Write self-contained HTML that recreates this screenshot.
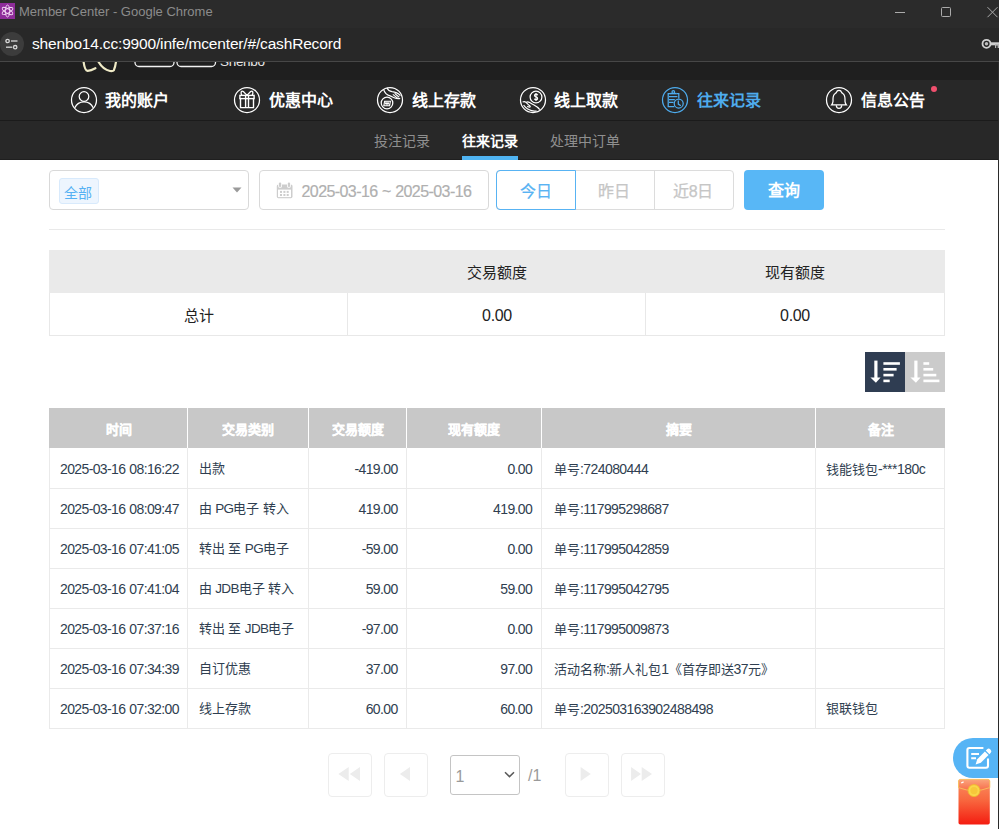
<!DOCTYPE html>
<html lang="zh-CN">
<head>
<meta charset="utf-8">
<title>Member Center</title>
<style>
*{box-sizing:border-box;margin:0;padding:0}
html,body{width:999px;height:829px;overflow:hidden;background:#fff;font-family:"Liberation Sans",sans-serif;position:relative}
.t{position:absolute;line-height:1;white-space:nowrap}
.r{position:absolute}
svg{position:absolute;overflow:visible}
</style>
</head>
<body>

<div class="r" style="left:0px;top:0px;width:999px;height:28px;background:#2b2b2b;"></div>
<div class="r" style="left:0px;top:28px;width:999px;height:33px;background:#282828;"></div>
<div class="r" style="left:0px;top:61px;width:999px;height:1px;background:#474747;"></div>
<svg style="left:0;top:3px" width="16" height="16" viewBox="0 0 16 16">
<rect x="0" y="0" width="15" height="16" fill="#8e2c9a"/>
<g fill="none" stroke="#f3d9f5" stroke-width="0.9">
<ellipse cx="7.5" cy="8" rx="2.2" ry="6"/>
<ellipse cx="7.5" cy="8" rx="2.2" ry="6" transform="rotate(60 7.5 8)"/>
<ellipse cx="7.5" cy="8" rx="2.2" ry="6" transform="rotate(-60 7.5 8)"/>
</g></svg>
<div class="t" style="top:5.0px;font-size:13px;color:#8c8c8c;left:19.0px;">Member Center - Google Chrome</div>
<div class="r" style="left:895px;top:12px;width:10px;height:1px;background:#ababab;"></div>
<div class="r" style="left:941px;top:7px;width:10px;height:10px;border:1px solid #ababab;border-radius:1.5px"></div>
<svg style="left:986px;top:6px" width="13" height="12" viewBox="0 0 12 12"><path d="M1 1.2L11 11.2M11 1.2L1 11.2" stroke="#ababab" stroke-width="1"/></svg>
<div class="r" style="left:0;top:32px;width:24px;height:24px;border-radius:12px;background:#3c3c3c"></div>
<svg style="left:0;top:32px" width="24" height="24" viewBox="0 0 24 24" fill="none" stroke="#d8d8d8" stroke-width="1.3">
<circle cx="7.6" cy="9" r="1.7"/><path d="M11 9H17.5"/>
<circle cx="15.2" cy="15.2" r="1.7"/><path d="M6 15.2H12.3"/></svg>
<div class="t" style="top:35.5px;font-size:15.5px;color:#ffffff;left:32.0px;"><span style="letter-spacing:-0.17px;">shenbo14.cc:9900/infe/mcenter/#/cashRecord</span></div>
<svg style="left:980px;top:37px" width="20" height="14" viewBox="0 0 20 14">
<circle cx="6.5" cy="6.8" r="4" fill="none" stroke="#d0d0d0" stroke-width="1.8"/><circle cx="6.5" cy="6.8" r="1.7" fill="#bdbdbd"/>
<rect x="10" y="5.3" width="10" height="3" fill="#d0d0d0"/><rect x="15" y="7" width="5" height="4" fill="#b8b8b8"/><rect x="16.2" y="8.6" width="1.4" height="2.6" fill="#2a2a2a"/>
</svg>
<div class="r" style="left:0px;top:62px;width:998px;height:18px;background:#1f1f1f;"></div>
<svg style="left:0;top:62px;overflow:hidden" width="300" height="18" viewBox="0 62 300 18">
<g fill="none" stroke="#efeac6" stroke-width="2.2" stroke-linecap="round">
<path d="M83.4 60 Q84.4 70.5 87.6 70.8 Q91 70.6 95.4 68.2"/>
<path d="M98.6 62 Q103 69.5 110 71 Q113 71.4 113.8 70.4 Q115.6 66 116.2 60"/>
</g>
<g fill="none" stroke="#f2f2f2" stroke-width="1.3">
<rect x="135" y="50" width="39" height="16.5" rx="4"/>
<rect x="177" y="50" width="38.5" height="16.5" rx="4"/>
</g>
<text x="220" y="65.5" font-family="Liberation Sans" font-size="13.5" fill="#e8e8e8" letter-spacing="-0.3">Shenbo</text>
</svg>
<div class="r" style="left:0px;top:80px;width:998px;height:40px;background:#282828;"></div>
<div class="r" style="left:0px;top:120px;width:998px;height:1px;background:#1b1b1b;"></div>
<div class="r" style="left:0px;top:121px;width:998px;height:38px;background:#282828;"></div>
<div class="r" style="left:0px;top:159px;width:998px;height:1px;background:#1f1f1f;"></div>
<div class="r" style="left:998px;top:62px;width:1px;height:767px;background:#2b2b2b;"></div>
<svg style="left:71px;top:87px" width="26" height="26" viewBox="0 0 26 26" fill="none" stroke="#ffffff" stroke-width="1.25"><circle cx="13" cy="13" r="12.5"/><circle cx="13" cy="9.5" r="4.8"/><path d="M3.8 20.8 A10.05 10.05 0 0 1 22.2 20.8"/></svg>
<div class="t" style="top:93.0px;font-size:16px;color:#ffffff;font-weight:bold;left:104.5px;">我的账户</div>
<svg style="left:234px;top:87px" width="26" height="26" viewBox="0 0 26 26" fill="none" stroke="#ffffff" stroke-width="1.25"><circle cx="13" cy="13" r="12.5"/><rect x="5.9" y="8.4" width="14.2" height="3.2" stroke-width="1.4"/><path d="M6.5 11.2V20.6H19.5V11.2M11.6 8.6V20.6M14.5 8.6V20.6" stroke-width="1.4"/><path d="M13 8.4 L9.4 4.6 Q7.8 3.6 7.2 5 Q6.8 6.4 7.8 8.4 M13 8.4 L16.6 4.6 Q18.2 3.6 18.8 5 Q19.2 6.4 18.2 8.4" stroke-width="1.3"/></svg>
<div class="t" style="top:93.0px;font-size:16px;color:#ffffff;font-weight:bold;left:268.5px;">优惠中心</div>
<svg style="left:377px;top:87px" width="26" height="26" viewBox="0 0 26 26" fill="none" stroke="#ffffff" stroke-width="1.25"><circle cx="13" cy="13" r="12.5"/><circle cx="10" cy="16" r="5.8"/><path d="M6.8 18.8 L7.6 14.2 H13.4 L12.6 18.8Z M8.2 17.4 L9 15.4 L10 17.4 L11 15.4 L12 17.4" stroke-width="1.1"/><path d="M6.6 2.4 Q8 7.6 13.2 8.9 L17.2 10.7 Q20.4 12.2 23.2 11.4 M10 1 Q11.4 4.2 15 4.6 Q20.2 5 23.4 8.6 M15.8 7.4 L20.8 11.4 M17.6 6.4 L22.2 10.2" stroke-width="1.2"/></svg>
<div class="t" style="top:93.0px;font-size:16px;color:#ffffff;font-weight:bold;left:411.5px;">线上存款</div>
<svg style="left:520px;top:87px" width="26" height="26" viewBox="0 0 26 26" fill="none" stroke="#ffffff" stroke-width="1.25"><circle cx="13" cy="13" r="12.5"/><circle cx="16" cy="10" r="5.9"/><path d="M17.7 8.2 Q17.2 7.1 16 7.1 Q14.5 7.1 14.5 8.4 Q14.5 9.6 16 9.8 Q17.6 10 17.6 11.4 Q17.6 12.8 16 12.8 Q14.7 12.8 14.3 11.8 M16 6 V14" stroke-width="1.2"/><path d="M2.6 15 Q4.6 14 6 15.4 L9.4 18.6 Q11 19.8 9.6 20.2 L7.2 19.4 M6.2 15.2 Q8 14.6 9.6 15.6 Q12.4 17.4 14 18 Q17.4 19.6 19.8 22.6 M3.6 18.2 Q7 22.6 11.6 23.6 Q14.6 24.2 16.6 24.2" stroke-width="1.2"/></svg>
<div class="t" style="top:93.0px;font-size:16px;color:#ffffff;font-weight:bold;left:553.5px;">线上取款</div>
<svg style="left:662px;top:87px" width="26" height="26" viewBox="0 0 26 26" fill="none" stroke="#4eacee" stroke-width="1.25"><circle cx="13" cy="13" r="12.5"/><path d="M12.4 19.5 H6.2 V6.6 H8.2 M14.4 6.6 H16.8 V11.6"/><circle cx="11.3" cy="5" r="1.3"/><path d="M8 6.6 H14.6" stroke-width="1.5"/><path d="M7 9.6 H15.4 M7 12.5 H12.8 M7 15.4 H11.6"/><circle cx="16.7" cy="16.5" r="4.5"/><path d="M16.3 13.6 V17.1 L18.8 18.8"/></svg>
<div class="t" style="top:93.0px;font-size:16px;color:#4eacee;font-weight:bold;left:696.5px;">往来记录</div>
<svg style="left:826px;top:87px" width="26" height="26" viewBox="0 0 26 26" fill="none" stroke="#ffffff" stroke-width="1.25"><circle cx="13" cy="13" r="12.5"/><path d="M13 3.4 Q11 3.4 10.4 5.4 Q10 6.1 9.3 6.5 Q7.1 7.6 7 12 V14.4 Q6.8 16.4 5.6 17.9 H20.4 Q19.2 16.4 19 14.4 V12 Q18.9 7.6 16.7 6.5 Q16 6.1 15.6 5.4 Q15 3.4 13 3.4Z"/><path d="M10.3 18.2 Q10.4 21.4 13 21.4 Q15.6 21.4 15.7 18.2"/></svg>
<div class="t" style="top:93.0px;font-size:16px;color:#ffffff;font-weight:bold;left:860.5px;">信息公告</div>
<div class="r" style="left:931px;top:86px;width:6px;height:6px;border-radius:3px;background:#f0506e"></div>
<div class="t" style="top:134.0px;font-size:14px;color:#8f8f8f;left:374.0px;">投注记录</div>
<div class="t" style="top:134.0px;font-size:14px;color:#ffffff;font-weight:bold;left:462.0px;">往来记录</div>
<div class="r" style="left:462px;top:156px;width:56px;height:4px;background:#4fb3f1;"></div>
<div class="t" style="top:134.0px;font-size:14px;color:#8f8f8f;left:550.0px;">处理中订单</div>
<div class="r" style="left:49px;top:170px;width:200px;height:40px;border:1px solid #d9d9d9;border-radius:4px"></div>
<div class="r" style="left:59px;top:178px;width:40px;height:26px;border:1px solid #d8eafc;border-radius:3px;background:#edf5fe"></div>
<div class="t" style="top:186.0px;font-size:14px;color:#55b1f3;left:64.0px;">全部</div>
<svg style="left:232px;top:187px" width="10" height="6" viewBox="0 0 10 6"><path d="M0.5 0.5H9.5L5 5.5Z" fill="#9a9a9a"/></svg>
<div class="r" style="left:259px;top:170px;width:230px;height:40px;border:1px solid #d9d9d9;border-radius:4px"></div>
<svg style="left:276px;top:182px" width="17" height="17" viewBox="0 0 17 17">
<rect x="0.8" y="2.5" width="15.7" height="13.7" rx="1.6" fill="#cdcdcd"/>
<rect x="2" y="7.6" width="13" height="7.5" fill="#fff"/>
<rect x="2.1" y="-0.2" width="3.9" height="6" rx="1.9" fill="#fff"/>
<rect x="11" y="-0.2" width="3.9" height="6" rx="1.9" fill="#fff"/>
<rect x="2.9" y="0.4" width="2.3" height="4.6" rx="1.1" fill="#cdcdcd"/>
<rect x="11.8" y="0.4" width="2.3" height="4.6" rx="1.1" fill="#cdcdcd"/>
<g fill="#cdcdcd"><rect x="4" y="8.9" width="2" height="2"/><rect x="7.4" y="8.9" width="2" height="2"/><rect x="10.7" y="8.9" width="2" height="2"/>
<rect x="4" y="12" width="2" height="2"/><rect x="7.4" y="12" width="2" height="2"/><rect x="10.7" y="12" width="2" height="2"/></g>
</svg>
<div class="t" style="top:183.5px;font-size:16px;color:#b0b0b0;left:301.5px;-webkit-text-stroke:0.2px #b0b0b0;"><span style="letter-spacing:-0.58px;">2025-03-16</span> <span style="letter-spacing:-0.58px;">~</span> <span style="letter-spacing:-0.58px;">2025-03-16</span></div>
<div class="r" style="left:496px;top:170px;width:238px;height:40px;border:1px solid #dcdcdc;border-radius:4px"></div>
<div class="r" style="left:654px;top:171px;width:1px;height:38px;background:#dcdcdc;"></div>
<div class="r" style="left:496px;top:170px;width:80px;height:40px;border:1px solid #58b3f3;border-radius:4px 0 0 4px"></div>
<div class="t" style="top:184.0px;font-size:16px;color:#58b3f3;left:535.5px;width:0;display:flex;justify-content:center;-webkit-text-stroke:0.2px #58b3f3;">今日</div>
<div class="t" style="top:184.0px;font-size:16px;color:#c6c6c6;left:614.0px;width:0;display:flex;justify-content:center;-webkit-text-stroke:0.25px #c6c6c6;">昨日</div>
<div class="t" style="top:184.0px;font-size:16px;color:#c6c6c6;left:693.0px;width:0;display:flex;justify-content:center;-webkit-text-stroke:0.25px #c6c6c6;">近<span style="letter-spacing:-0.50px;">8</span>日</div>
<div class="r" style="left:744px;top:170px;width:80px;height:40px;border-radius:4px;background:#58b7f6"></div>
<div class="t" style="top:183.0px;font-size:16px;color:#ffffff;font-weight:bold;left:784.0px;width:0;display:flex;justify-content:center;">查询</div>
<div class="r" style="left:49px;top:229px;width:896px;height:1px;background:#e9e9e9;"></div>
<div class="r" style="left:49px;top:250px;width:896px;height:86px;border:1px solid #e8e8e8"></div>
<div class="r" style="left:49px;top:250px;width:896px;height:43px;background:#eaeaea;"></div>
<div class="r" style="left:347px;top:293px;width:1px;height:42px;background:#e8e8e8;"></div>
<div class="r" style="left:645px;top:293px;width:1px;height:42px;background:#e8e8e8;"></div>
<div class="t" style="top:265.0px;font-size:15px;color:#222;left:497.0px;width:0;display:flex;justify-content:center;">交易额度</div>
<div class="t" style="top:265.0px;font-size:15px;color:#222;left:795.2px;width:0;display:flex;justify-content:center;">现有额度</div>
<div class="t" style="top:307.5px;font-size:15px;color:#222;left:198.6px;width:0;display:flex;justify-content:center;">总计</div>
<div class="t" style="top:308.0px;font-size:16px;color:#222;left:497.0px;width:0;display:flex;justify-content:center;"><span style="letter-spacing:-0.30px;">0.00</span></div>
<div class="t" style="top:308.0px;font-size:16px;color:#222;left:795.0px;width:0;display:flex;justify-content:center;"><span style="letter-spacing:-0.30px;">0.00</span></div>
<div class="r" style="left:865px;top:352px;width:40px;height:40px;background:#2f3d52;"></div>
<div class="r" style="left:905px;top:352px;width:40px;height:40px;background:#cbcbcb;"></div>
<svg style="left:865px;top:352px" width="80" height="40" viewBox="865 352 80 40" fill="#ffffff">
<rect x="874.3" y="360.6" width="3.2" height="18"/><path d="M870.4 377.6 H880.6 L875.9 382.8Z"/>
<rect x="883.4" y="362.2" width="16.5" height="2.6"/><rect x="883.4" y="368" width="13.2" height="2.6"/><rect x="883.4" y="373.8" width="10.2" height="2.6"/><rect x="883.4" y="379.6" width="6.3" height="2.6"/>
<rect x="914.3" y="360.6" width="3.2" height="18"/><path d="M910.4 377.6 H920.6 L915.9 382.8Z"/>
<rect x="923.4" y="362.2" width="5.8" height="2.6"/><rect x="923.4" y="368" width="9.8" height="2.6"/><rect x="923.4" y="373.8" width="12.9" height="2.6"/><rect x="923.4" y="379.6" width="16" height="2.6"/>
</svg>
<div class="r" style="left:49px;top:408px;width:896px;height:40px;background:#c8c8c8;"></div>
<div class="r" style="left:187px;top:408px;width:1px;height:40px;background:#ffffff;"></div>
<div class="r" style="left:308px;top:408px;width:1px;height:40px;background:#ffffff;"></div>
<div class="r" style="left:406px;top:408px;width:1px;height:40px;background:#ffffff;"></div>
<div class="r" style="left:541px;top:408px;width:1px;height:40px;background:#ffffff;"></div>
<div class="r" style="left:815px;top:408px;width:1px;height:40px;background:#ffffff;"></div>
<div class="t" style="top:423.0px;font-size:13px;color:#ffffff;font-weight:bold;left:118.5px;width:0;display:flex;justify-content:center;-webkit-text-stroke:0.25px #fff;">时间</div>
<div class="t" style="top:423.0px;font-size:13px;color:#ffffff;font-weight:bold;left:248.0px;width:0;display:flex;justify-content:center;-webkit-text-stroke:0.25px #fff;">交易类别</div>
<div class="t" style="top:423.0px;font-size:13px;color:#ffffff;font-weight:bold;left:357.5px;width:0;display:flex;justify-content:center;-webkit-text-stroke:0.25px #fff;">交易额度</div>
<div class="t" style="top:423.0px;font-size:13px;color:#ffffff;font-weight:bold;left:474.0px;width:0;display:flex;justify-content:center;-webkit-text-stroke:0.25px #fff;">现有额度</div>
<div class="t" style="top:423.0px;font-size:13px;color:#ffffff;font-weight:bold;left:678.5px;width:0;display:flex;justify-content:center;-webkit-text-stroke:0.25px #fff;">摘要</div>
<div class="t" style="top:423.0px;font-size:13px;color:#ffffff;font-weight:bold;left:880.5px;width:0;display:flex;justify-content:center;-webkit-text-stroke:0.25px #fff;">备注</div>
<div class="r" style="left:49px;top:448px;width:896px;height:281px;border:1px solid #eaeaea;border-top:0"></div>
<div class="r" style="left:49px;top:488px;width:896px;height:1px;background:#eaeaea;"></div>
<div class="r" style="left:49px;top:528px;width:896px;height:1px;background:#eaeaea;"></div>
<div class="r" style="left:49px;top:568px;width:896px;height:1px;background:#eaeaea;"></div>
<div class="r" style="left:49px;top:608px;width:896px;height:1px;background:#eaeaea;"></div>
<div class="r" style="left:49px;top:648px;width:896px;height:1px;background:#eaeaea;"></div>
<div class="r" style="left:49px;top:688px;width:896px;height:1px;background:#eaeaea;"></div>
<div class="r" style="left:187px;top:448px;width:1px;height:281px;background:#eaeaea;"></div>
<div class="r" style="left:308px;top:448px;width:1px;height:281px;background:#eaeaea;"></div>
<div class="r" style="left:406px;top:448px;width:1px;height:281px;background:#eaeaea;"></div>
<div class="r" style="left:541px;top:448px;width:1px;height:281px;background:#eaeaea;"></div>
<div class="r" style="left:815px;top:448px;width:1px;height:281px;background:#eaeaea;"></div>
<div class="t" style="top:461.5px;font-size:14px;color:#2f3e50;left:60.0px;"><span style="letter-spacing:-0.62px;">2025-03-16</span> <span style="letter-spacing:-0.62px;">08:16:22</span></div>
<div class="t" style="top:461.5px;font-size:13px;color:#2f3e50;left:198.5px;">出款</div>
<div class="t" style="top:461.5px;font-size:14px;color:#2f3e50;right:601.4px;"><span style="letter-spacing:-0.62px;">-419.00</span></div>
<div class="t" style="top:461.5px;font-size:14px;color:#2f3e50;right:466.8px;"><span style="letter-spacing:-0.62px;">0.00</span></div>
<div class="t" style="top:461.5px;font-size:13px;color:#2f3e50;left:554.0px;">单号<span style="letter-spacing:-0.58px;font-size:14px;">:724080444</span></div>
<div class="t" style="top:461.5px;font-size:13px;color:#2f3e50;left:826.0px;">钱能钱包<span style="letter-spacing:-0.50px;font-size:14px;">-***180c</span></div>
<div class="t" style="top:501.5px;font-size:14px;color:#2f3e50;left:60.0px;"><span style="letter-spacing:-0.62px;">2025-03-16</span> <span style="letter-spacing:-0.62px;">08:09:47</span></div>
<div class="t" style="top:501.5px;font-size:13px;color:#2f3e50;left:198.5px;">由 <span style="letter-spacing:-0.60px;font-size:13.5px;">PG</span>电子 转入</div>
<div class="t" style="top:501.5px;font-size:14px;color:#2f3e50;right:601.4px;"><span style="letter-spacing:-0.62px;">419.00</span></div>
<div class="t" style="top:501.5px;font-size:14px;color:#2f3e50;right:466.8px;"><span style="letter-spacing:-0.62px;">419.00</span></div>
<div class="t" style="top:501.5px;font-size:13px;color:#2f3e50;left:554.0px;">单号<span style="letter-spacing:-0.58px;font-size:14px;">:117995298687</span></div>
<div class="t" style="top:541.5px;font-size:14px;color:#2f3e50;left:60.0px;"><span style="letter-spacing:-0.62px;">2025-03-16</span> <span style="letter-spacing:-0.62px;">07:41:05</span></div>
<div class="t" style="top:541.5px;font-size:13px;color:#2f3e50;left:198.5px;">转出 至 <span style="letter-spacing:-0.60px;font-size:13.5px;">PG</span>电子</div>
<div class="t" style="top:541.5px;font-size:14px;color:#2f3e50;right:601.4px;"><span style="letter-spacing:-0.62px;">-59.00</span></div>
<div class="t" style="top:541.5px;font-size:14px;color:#2f3e50;right:466.8px;"><span style="letter-spacing:-0.62px;">0.00</span></div>
<div class="t" style="top:541.5px;font-size:13px;color:#2f3e50;left:554.0px;">单号<span style="letter-spacing:-0.58px;font-size:14px;">:117995042859</span></div>
<div class="t" style="top:581.5px;font-size:14px;color:#2f3e50;left:60.0px;"><span style="letter-spacing:-0.62px;">2025-03-16</span> <span style="letter-spacing:-0.62px;">07:41:04</span></div>
<div class="t" style="top:581.5px;font-size:13px;color:#2f3e50;left:198.5px;">由 <span style="letter-spacing:-0.60px;font-size:13.5px;">JDB</span>电子 转入</div>
<div class="t" style="top:581.5px;font-size:14px;color:#2f3e50;right:601.4px;"><span style="letter-spacing:-0.62px;">59.00</span></div>
<div class="t" style="top:581.5px;font-size:14px;color:#2f3e50;right:466.8px;"><span style="letter-spacing:-0.62px;">59.00</span></div>
<div class="t" style="top:581.5px;font-size:13px;color:#2f3e50;left:554.0px;">单号<span style="letter-spacing:-0.58px;font-size:14px;">:117995042795</span></div>
<div class="t" style="top:621.5px;font-size:14px;color:#2f3e50;left:60.0px;"><span style="letter-spacing:-0.62px;">2025-03-16</span> <span style="letter-spacing:-0.62px;">07:37:16</span></div>
<div class="t" style="top:621.5px;font-size:13px;color:#2f3e50;left:198.5px;">转出 至 <span style="letter-spacing:-0.60px;font-size:13.5px;">JDB</span>电子</div>
<div class="t" style="top:621.5px;font-size:14px;color:#2f3e50;right:601.4px;"><span style="letter-spacing:-0.62px;">-97.00</span></div>
<div class="t" style="top:621.5px;font-size:14px;color:#2f3e50;right:466.8px;"><span style="letter-spacing:-0.62px;">0.00</span></div>
<div class="t" style="top:621.5px;font-size:13px;color:#2f3e50;left:554.0px;">单号<span style="letter-spacing:-0.58px;font-size:14px;">:117995009873</span></div>
<div class="t" style="top:661.5px;font-size:14px;color:#2f3e50;left:60.0px;"><span style="letter-spacing:-0.62px;">2025-03-16</span> <span style="letter-spacing:-0.62px;">07:34:39</span></div>
<div class="t" style="top:661.5px;font-size:13px;color:#2f3e50;left:198.5px;">自订优惠</div>
<div class="t" style="top:661.5px;font-size:14px;color:#2f3e50;right:601.4px;"><span style="letter-spacing:-0.62px;">37.00</span></div>
<div class="t" style="top:661.5px;font-size:14px;color:#2f3e50;right:466.8px;"><span style="letter-spacing:-0.62px;">97.00</span></div>
<div class="t" style="top:661.5px;font-size:13px;color:#2f3e50;left:554.0px;">活动名称<span style="letter-spacing:-0.58px;font-size:14px;">:</span>新人礼包<span style="letter-spacing:-0.58px;font-size:14px;">1</span>《首存即送<span style="letter-spacing:-0.58px;font-size:14px;">37</span>元》</div>
<div class="t" style="top:701.5px;font-size:14px;color:#2f3e50;left:60.0px;"><span style="letter-spacing:-0.62px;">2025-03-16</span> <span style="letter-spacing:-0.62px;">07:32:00</span></div>
<div class="t" style="top:701.5px;font-size:13px;color:#2f3e50;left:198.5px;">线上存款</div>
<div class="t" style="top:701.5px;font-size:14px;color:#2f3e50;right:601.4px;"><span style="letter-spacing:-0.62px;">60.00</span></div>
<div class="t" style="top:701.5px;font-size:14px;color:#2f3e50;right:466.8px;"><span style="letter-spacing:-0.62px;">60.00</span></div>
<div class="t" style="top:701.5px;font-size:13px;color:#2f3e50;left:554.0px;">单号<span style="letter-spacing:-0.58px;font-size:14px;">:202503163902488498</span></div>
<div class="t" style="top:701.5px;font-size:13px;color:#2f3e50;left:826.0px;">银联钱包</div>
<div class="r" style="left:328.0px;top:753px;width:43.5px;height:43.5px;border:1px solid #ededed;border-radius:4px"></div>
<svg style="left:328.0px;top:753px" width="44" height="44" viewBox="0 0 44 44" fill="#ececec"><path d="M10.4 21 L20.7 14 V28Z M21.8 21 L32 14 V28Z"/></svg>
<div class="r" style="left:384.0px;top:753px;width:43.5px;height:43.5px;border:1px solid #ededed;border-radius:4px"></div>
<svg style="left:384.0px;top:753px" width="44" height="44" viewBox="0 0 44 44" fill="#ececec"><path d="M15.9 21 L26 14 V28Z"/></svg>
<div class="r" style="left:450px;top:755px;width:70px;height:40px;border:1px solid #c4c4c4;border-radius:3px"></div>
<div class="t" style="top:769.0px;font-size:16px;color:#9a9a9a;left:455.5px;">1</div>
<svg style="left:504px;top:771px" width="11" height="7" viewBox="0 0 11 7"><path d="M1 1.2 L5.5 5.6 L10 1.2" fill="none" stroke="#5a5a5a" stroke-width="1.5"/></svg>
<div class="t" style="top:768.0px;font-size:16px;color:#9a9a9a;left:528.0px;">/1</div>
<div class="r" style="left:565.0px;top:753px;width:43.5px;height:43.5px;border:1px solid #ededed;border-radius:4px"></div>
<svg style="left:565.0px;top:753px" width="44" height="44" viewBox="0 0 44 44" fill="#ececec"><path d="M25.8 21 L15.6 14 V28Z"/></svg>
<div class="r" style="left:621.0px;top:753px;width:43.5px;height:43.5px;border:1px solid #ededed;border-radius:4px"></div>
<svg style="left:621.0px;top:753px" width="44" height="44" viewBox="0 0 44 44" fill="#ececec"><path d="M20 21 L10.1 14 V28Z M31 21 L20.7 14 V28Z"/></svg>
<div class="r" style="left:953px;top:738px;width:45px;height:40px;border-radius:20px 0 0 20px;background:#56b4f5"></div>
<svg style="left:953px;top:738px" width="45" height="40" viewBox="953 738 45 40" fill="none" stroke="#fff" stroke-width="2.1">
<path d="M988 758.4 V765.8 Q988 767.8 986 767.8 H969.4 Q967.4 767.8 967.4 765.8 V750 Q967.4 748 969.4 748 H983.4"/>
<path d="M971.2 754 H979 M971.2 758.2 H976"/>
<g transform="translate(975.6 764.4) rotate(-45) scale(1.06)" fill="#fff" stroke="none">
<path d="M0 0 L4.6 -2.4 H14.8 V2.4 H4.6Z"/>
<path d="M16 -2.4 H17.8 Q19.8 -2.4 19.8 0 Q19.8 2.4 17.8 2.4 H16Z"/>
</g>
</svg>
<svg style="left:958px;top:779px" width="33" height="47" viewBox="0 0 33 47">
<defs><linearGradient id="rg" x1="0" y1="0" x2="0" y2="1"><stop offset="0" stop-color="#fb8e62"/><stop offset="0.45" stop-color="#f8683f"/><stop offset="1" stop-color="#f41c10"/></linearGradient>
<linearGradient id="fg" x1="0" y1="0" x2="0" y2="1"><stop offset="0" stop-color="#fba57c"/><stop offset="1" stop-color="#f76c4a"/></linearGradient></defs>
<rect x="0.5" y="0.4" width="31.3" height="45.2" rx="1.8" fill="url(#rg)"/>
<path d="M0.5 2.2 Q0.5 0.4 2.3 0.4 H30 Q31.8 0.4 31.8 2.2 V8.6 Q16 14.6 0.5 8.6Z" fill="url(#fg)" stroke="#f7c25c" stroke-width="0.9"/>
<circle cx="16" cy="11.6" r="6" fill="#f9d64a" stroke="#efb52c" stroke-width="0.9"/>
<circle cx="16" cy="11.6" r="3.6" fill="#f6c83a"/>
<path d="M3.2 4 L5.6 2.8" stroke="#fff" stroke-width="1.3"/>
</svg>
</body></html>
